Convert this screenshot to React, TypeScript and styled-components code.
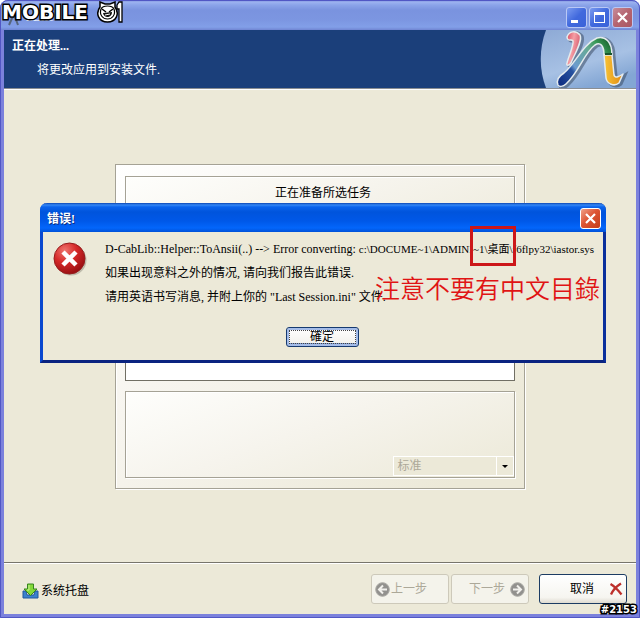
import React from 'react';
import styled, { createGlobalStyle, css } from 'styled-components';

const GlobalStyle = createGlobalStyle`
  * { box-sizing: border-box; }
  body { margin: 0; background: #fff; }
  button, select { font: inherit; color: inherit; }
  body, button, select {
    font-family: 'Liberation Serif', 'Noto Sans CJK SC', serif;
    font-size: 12px;
    line-height: 16px;
  }
`;

const Window = styled.div`
  position: relative;
  display: flex;
  flex-direction: column;
  min-height: 100vh;
  border: 4px solid #7b81dc;
  border-top: 0;
  border-radius: 8px 8px 0 0;
  background: #ece9d8;
  outline: 1px solid #5157c4;
  outline-offset: -1px;
`;

const TitleBar = styled.header`
  display: flex;
  align-items: center;
  height: 30px;
  margin: 0 -4px;
  padding: 4px 7px 0 8px;
  gap: 6px;
  border-radius: 8px 8px 0 0;
  background: linear-gradient(#6c7fd2 0, #9db3f0 2px, #8ba4e9 5px, #7a93df 10px, #7c96e1 20px, #829fe8 27px, #7085d2 30px);
  color: #dfe8fc;
  font-weight: bold;
`;

const WindowName = styled.span`
  flex: 1;
  line-height: 20px;
`;

const Controls = styled.div`
  display: flex;
  gap: 2px;
`;

const CaptionButton = styled.button<{ $tone: 'blue' | 'faded' | 'red' }>`
  display: grid;
  place-items: center;
  width: 21px;
  height: 21px;
  padding: 0;
  border: 1px solid ${p => (p.$tone === 'red' ? '#fff' : '#b9c8f5')};
  border-radius: 3px;
  background: ${p =>
    p.$tone === 'blue'
      ? 'linear-gradient(135deg, #7b9bf0, #4169dd 50%, #3a62d9)'
      : p.$tone === 'faded'
        ? 'linear-gradient(135deg, #c78c9a, #b5646f 50%, #a95764)'
        : 'linear-gradient(135deg, #f0a289, #dd5534 45%, #c33c19)'};
`;

const Banner = styled.section`
  display: flex;
  justify-content: space-between;
  height: 60px;
  background: #1b3f7a;
  border-bottom: 1px solid #fff;
  box-shadow: inset 0 -1px #8b8e92;
  color: #fff;
`;

const BannerText = styled.div`
  padding: 8px;
`;

const Heading = styled.h1`
  margin: 0 0 8px;
  font-size: 12px;
  line-height: 16px;
`;

const Detail = styled.p`
  margin: 0;
  padding-left: 25px;
`;

const BannerArt = styled.svg`
  flex: none;
  width: 96px;
  height: 58px;
`;

const Main = styled.main`
  flex: 1;
  display: grid;
  place-items: center;
`;

const Panel = styled.section`
  display: flex;
  flex-direction: column;
  gap: 10px;
  width: 65%;
  min-height: 325px;
  padding: 11px 9px 10px;
  border: 1px solid #a5a295;
  box-shadow: 1px 1px #fff, inset 1px 1px #fff;
  background: linear-gradient(135deg, #fff, #f7f5ef 35%, #ece9d8 90%);
`;

const Group = styled.div`
  display: flex;
  border: 1px solid #a5a295;
  box-shadow: 1px 1px #fff, inset 1px 1px #fff;
  background: linear-gradient(160deg, #fefefc, #f6f4ed 45%, #ece9d8);
`;

const StatusGroup = styled(Group)`
  justify-content: center;
  height: 80px;
  padding: 8px 0 0 6px;
`;

const TaskList = styled.div`
  flex: 1;
  border: 1px solid #716f64;
  background: #fff;
`;

const OptionsGroup = styled(Group)`
  justify-content: flex-end;
  align-items: flex-end;
  height: 87px;
  padding-bottom: 1px;
`;

const SelectWrap = styled.div`
  display: flex;
  align-items: center;
  width: 121px;
  height: 20px;
  border: 1px solid #fff;
  background: #ece9d8;
`;

const ModeSelect = styled.select`
  flex: 1;
  height: 18px;
  padding: 0 3px;
  border: 0;
  border-right: 1px solid #fff;
  background: transparent;
  appearance: none;
  opacity: 1;
  color: #aca899;
`;

const Arrow = styled.svg`
  width: 16px;
  height: 18px;
`;

const Footer = styled.footer`
  display: flex;
  justify-content: space-between;
  align-items: flex-start;
  height: 52px;
  padding: 11px 9px 0 18px;
  border-top: 1px solid #77756b;
  box-shadow: inset 0 1px #fff;
`;

const TrayButton = styled.button`
  display: flex;
  align-items: center;
  gap: 2px;
  height: 34px;
  padding: 0;
  border: 0;
  background: none;
`;

const Steps = styled.nav`
  display: flex;
  gap: 2px;
`;

const StepButton = styled.button<{ $primary?: boolean }>`
  display: flex;
  align-items: center;
  justify-content: space-between;
  width: 78px;
  height: 30px;
  padding: 0 3px;
  border: 1px solid #cdc9ba;
  border-radius: 3px;
  background: #f4f3eb;
  color: #aca899;
  ${p => p.$primary && css`
    width: 88px;
    margin-left: 8px;
    padding: 0 3px 0 30px;
    border-color: #1c3c63;
    background: linear-gradient(#fff, #f6f5f0 80%, #dfdbd0);
    color: #000;
  `}
`;

const StepLabel = styled.span<{ $side?: 'left' | 'right' }>`
  flex: 1;
  text-align: ${p => p.$side ?? 'left'};
  padding: ${p => (p.$side === 'right' ? '0 5px 0 0' : '0 0 0 1px')};
`;

const Dialog = styled.div`
  position: absolute;
  top: 203px;
  left: 36px;
  right: 30px;
  border: 3px solid;
  border-color: #0a48cf #0a2f9c #0a2380 #0a48cf;
  border-top: 0;
  border-radius: 7px 7px 0 0;
  background: #ece9d8;
`;

const DialogTitle = styled.header`
  display: flex;
  align-items: center;
  justify-content: space-between;
  height: 29px;
  margin: 0 -3px;
  padding: 2px 5px 0 7px;
  border-radius: 7px 7px 0 0;
  background: linear-gradient(#0a46b4 0, #3487f5 2px, #0a63ec 4px, #0054dc 9px, #0058e8 18px, #0366fb 25px, #0051d8 29px);
  color: #fff;
  font-weight: bold;
  text-shadow: 1px 1px #0a2c82;
`;

const DialogContent = styled.div`
  display: flex;
  gap: 16px;
  padding: 5px 0 0 10px;
`;

const ErrorIcon = styled.svg`
  flex: none;
  width: 36px;
  height: 36px;
  margin-top: 5px;
`;

const Message = styled.div`
  white-space: nowrap;
  line-height: 24px;
`;

const Line = styled.p`
  margin: 0;
`;

const FilePath = styled.span`
  font-size: 11px;
`;

const DialogActions = styled.div`
  display: flex;
  justify-content: center;
  padding: 18px 2px 13px 0;
`;

const OkButton = styled.button`
  width: 73px;
  height: 20px;
  padding: 0;
  border: 1px solid #163a70;
  border-radius: 3px;
  background: linear-gradient(#fff, #f1f0ea);
  box-shadow: inset 0 0 0 2px #a4bce8, inset 0 -3px #7e9cd5;
  line-height: 18px;
  outline: 1px dotted #444;
  outline-offset: -4px;
`;

const MarkBox = styled.div`
  position: absolute;
  top: 23px;
  right: 87px;
  width: 46px;
  height: 40px;
  border: 3px solid #cc1719;
`;

const MarkNote = styled.div`
  position: absolute;
  top: 68px;
  right: 3px;
  color: #e01414;
  font-family: 'Noto Sans CJK TC', sans-serif;
  font-weight: 350;
  font-size: 25px;
  line-height: 32px;
  white-space: nowrap;
`;

const Brand = styled.div`
  position: absolute;
  top: 1px;
  left: -2px;
  display: flex;
  align-items: center;
  gap: 9px;
`;

const Stamp = styled.span<{ $size: number }>`
  font-family: 'DejaVu Sans', sans-serif;
  font-weight: bold;
  font-size: ${p => p.$size}px;
  line-height: 20px;
  color: #fff;
  -webkit-text-stroke: 3px #000;
  paint-order: stroke fill;
`;

const PostNumber = styled.div`
  position: absolute;
  right: -1px;
  bottom: -6px;
`;

const Cross = () => (
  <svg width="15" height="15" viewBox="0 0 15 15" aria-hidden="true">
    <path d="M3 3l9 9M12 3l-9 9" stroke="#fff" strokeWidth="2.2" />
  </svg>
);

const StepIcon = ({ back }: { back?: boolean }) => (
  <svg width="15" height="15" viewBox="0 0 15 15" aria-hidden="true">
    <circle cx="7.5" cy="7.5" r="6.8" fill="#92918e" stroke="#aaa9a4" />
    <path
      d={back ? 'M8 3.5L4 7.5l4 4M4.5 7.5H12' : 'M7 3.5l4 4-4 4M10.5 7.5H3'}
      fill="none" stroke="#f2f1ed" strokeWidth="2"
    />
  </svg>
);

const hook = 'M27 7C29 1 36 0 40 5C43 11 34 25 31 33C29 36 26 36 27 33C29 25 34 15 33 11C31 8 28 13 27 7Z';
const stem = 'M18 55C16 50 19 46 24 43C35 34 43 14 57 8C65 6 72 11 72 25H64C64 15 60 12 55 15C44 23 39 42 26 54C23 57 19 57 18 55Z';
const foot = 'M64 25H72L74 45C75 49 80 46 83 44L79 53C74 57 67 54 66 48Z';

const Logo = () => (
  <BannerArt viewBox="0 0 96 58" aria-hidden="true">
    <defs>
      <linearGradient id="disc" x1="0" y1="0" x2="0.5" y2="1">
        <stop offset="0" stopColor="#8da9d5" />
        <stop offset="0.65" stopColor="#a7c1e4" />
        <stop offset="1" stopColor="#83a6d4" />
      </linearGradient>
      <linearGradient id="stem" gradientUnits="userSpaceOnUse" x1="20" y1="54" x2="70" y2="15">
        <stop offset="0" stopColor="#102f83" />
        <stop offset="0.28" stopColor="#2853a0" />
        <stop offset="0.35" stopColor="#6d9bd0" />
        <stop offset="0.7" stopColor="#65aa91" />
        <stop offset="0.85" stopColor="#3a9a58" />
        <stop offset="1" stopColor="#1f6d35" />
      </linearGradient>
      <linearGradient id="hook" x1="0" y1="0" x2="1" y2="0.4">
        <stop offset="0" stopColor="#d9485c" />
        <stop offset="0.5" stopColor="#f5a0a6" />
        <stop offset="1" stopColor="#d3566a" />
      </linearGradient>
      <linearGradient id="foot" x1="0" y1="0" x2="1" y2="0">
        <stop offset="0" stopColor="#f8c437" />
        <stop offset="1" stopColor="#e08a12" />
      </linearGradient>
    </defs>
    <path d="M6 0C-1 18-1 40 6 58H96V0Z" fill="url(#disc)" />
    <path d={`${hook}${stem}${foot}`} fill="#33435a" stroke="#33435a" strokeWidth="3" opacity="0.5" transform="translate(2 1)" />
    <g stroke="#e4ebee" strokeWidth="1.5" strokeLinejoin="round">
      <path d={hook} fill="url(#hook)" />
      <path d={stem} fill="url(#stem)" />
      <path d={foot} fill="url(#foot)" />
    </g>
    <path d="M65 24h7" stroke="#19572d" strokeWidth="2" />
  </BannerArt>
);

const Face = () => (
  <svg width="27" height="22" viewBox="0 0 27 22" aria-hidden="true">
    <path d="M3 6L3 1l5 2h5l5-2v5c5 7 1 15-7.500 15S-2 13 3 6Z" fill="#fff" stroke="#000" strokeWidth="1.5" />
    <path d="M4 8c2-4 11-4 13 0 2 6-2 10-6.500 10S2 14 4 8Z" fill="#fff" stroke="#000" strokeWidth="1.2" />
    <path d="M5 8l4 3M16 8l-4 3" stroke="#000" strokeWidth="1.5" />
    <path d="M6 12l9-1c0 6-8 7-9 1Z" fill="#111" />
    <path d="M8 14l5-1" stroke="#fff" />
    <path d="M20 4l2-3h3v20h-3V8h-2Z" fill="#fff" stroke="#000" strokeWidth="1.3" />
  </svg>
);

export default function App() {
  return (
    <>
      <GlobalStyle />
      <Window>
        <TitleBar>
          <svg width="12" height="20" viewBox="0 0 12 20" aria-hidden="true">
            <path d="M1 18L5 9l2 1 3 8" fill="none" stroke="#56667c" strokeWidth="2" />
          </svg>
          <WindowName>nLite</WindowName>
          <Controls>
            <CaptionButton $tone="blue" aria-label="最小化">
              <svg width="15" height="15" aria-hidden="true"><path d="M2 10h7v3H2Z" fill="#fff" /></svg>
            </CaptionButton>
            <CaptionButton $tone="blue" aria-label="最大化">
              <svg width="15" height="15" aria-hidden="true">
                <path d="M2 2h11v11H2ZM3 5v7h9V5Z" fill="#fff" fillRule="evenodd" />
              </svg>
            </CaptionButton>
            <CaptionButton $tone="faded" aria-label="关闭"><Cross /></CaptionButton>
          </Controls>
        </TitleBar>
        <Banner>
          <BannerText>
            <Heading>正在处理...</Heading>
            <Detail>将更改应用到安装文件.</Detail>
          </BannerText>
          <Logo />
        </Banner>
        <Main>
          <Panel>
            <StatusGroup>正在准备所选任务</StatusGroup>
            <TaskList />
            <OptionsGroup>
              <SelectWrap>
                <ModeSelect disabled aria-label="模式"><option>标准</option></ModeSelect>
                <Arrow viewBox="0 0 16 18" aria-hidden="true"><path d="M5 8h6l-3 3Z" /></Arrow>
              </SelectWrap>
            </OptionsGroup>
          </Panel>
        </Main>
        <Footer>
          <TrayButton>
            <svg width="17" height="16" viewBox="0 0 17 16" aria-hidden="true">
              <path d="M1 8h3l1 4h7l1-4h3v7H1Z" fill="#3a81cd" stroke="#20579e" />
              <path d="M5.5 1h6v5H15l-6.500 6.500L2 6h3.500Z" fill="#83d838" stroke="#37851e" />
              <path d="M7 2v5H5" stroke="#c9f391" fill="none" />
            </svg>
            系统托盘
          </TrayButton>
          <Steps>
            <StepButton disabled><StepIcon back /><StepLabel>上一步</StepLabel></StepButton>
            <StepButton disabled><StepLabel $side="right">下一步</StepLabel><StepIcon /></StepButton>
            <StepButton $primary>
              取消
              <svg width="14" height="14" viewBox="0 0 14 14" aria-hidden="true">
                <path d="M1.500 2C5 4 9 8 12.500 12.500M12 1.500C8 4 4 8 2 12.500" fill="none" stroke="#bd302b" strokeWidth="2.300" />
              </svg>
            </StepButton>
          </Steps>
        </Footer>
        <Dialog role="dialog" aria-labelledby="error-title">
          <DialogTitle>
            <span id="error-title">错误!</span>
            <CaptionButton $tone="red" aria-label="关闭"><Cross /></CaptionButton>
          </DialogTitle>
          <DialogContent>
            <ErrorIcon viewBox="0 0 36 36" aria-hidden="true">
              <defs>
                <radialGradient id="ball" cx="0.35" cy="0.25" r="0.75">
                  <stop offset="0" stopColor="#ef7770" />
                  <stop offset="0.5" stopColor="#d62a29" />
                  <stop offset="1" stopColor="#9c1013" />
                </radialGradient>
              </defs>
              <circle cx="18" cy="18" r="15.500" fill="#8f8b7d" opacity="0.5" />
              <circle cx="16.500" cy="16.500" r="15.500" fill="url(#ball)" stroke="#961d1d" />
              <path d="M10 10l13 13M23 10l-13 13" stroke="#fff" strokeWidth="4.500" />
            </ErrorIcon>
            <Message>
              <Line>D-CabLib::Helper::ToAnsii(..) --&gt; Error converting: <FilePath>c:\DOCUME~1\ADMINI~1\桌面\f6flpy32\iastor.sys</FilePath></Line>
              <Line>如果出现意料之外的情况, 请向我们报告此错误.</Line>
              <Line>请用英语书写消息, 并附上你的 "Last Session.ini" 文件.</Line>
            </Message>
          </DialogContent>
          <DialogActions><OkButton lang="zh-Hant">確定</OkButton></DialogActions>
          <MarkBox />
          <MarkNote lang="zh-Hant">注意不要有中文目錄</MarkNote>
        </Dialog>
        <Brand><Stamp $size={20}>MOBILE</Stamp><Face /></Brand>
        <PostNumber><Stamp $size={10}>#2153</Stamp></PostNumber>
      </Window>
    </>
  );
}
